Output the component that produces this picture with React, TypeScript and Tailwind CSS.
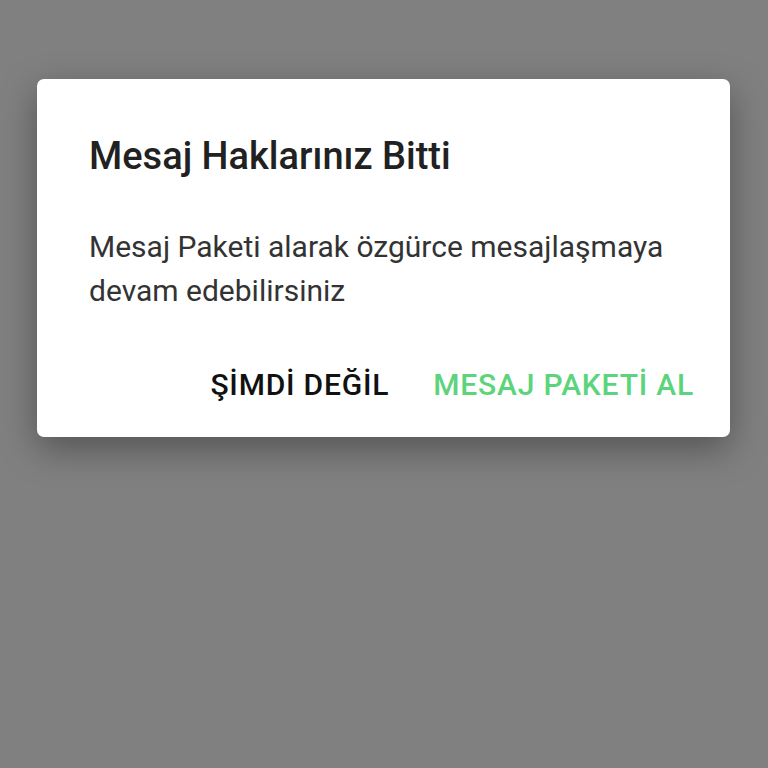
import React from "react";

export default function App() {
  return (
    <div className="h-[768px] w-full bg-[#808080] px-[37px] pt-[79px]" style={{ fontFamily: "Roboto, 'Noto Sans', sans-serif" }}>
      <div className="flex h-[358px] w-[693px] flex-col rounded-[7px] bg-white shadow-[0_12px_36px_rgba(0,0,0,0.35)]">
        <h1 className="pl-[52px] pt-[53px] text-[38px] leading-[48px] font-medium text-[#212121]">
          Mesaj Haklarınız Bitti
        </h1>
        <p className="mt-[45px] pl-[52px] pr-[40px] text-[30px] leading-[44px] text-[#333333]">
          Mesaj Paketi alarak özgürce mesajlaşmaya devam edebilirsiniz
        </p>
        <div className="mt-[52px] flex justify-end gap-[44px] pr-[36px]">
          <button className="text-[30px] leading-[40px] font-medium tracking-[0.8px] text-[#111111]">ŞİMDİ DEĞİL</button>
          <button className="text-[30px] leading-[40px] font-medium tracking-[0.8px] text-[#5bd47c]">MESAJ PAKETİ AL</button>
        </div>
      </div>
    </div>
  );
}
